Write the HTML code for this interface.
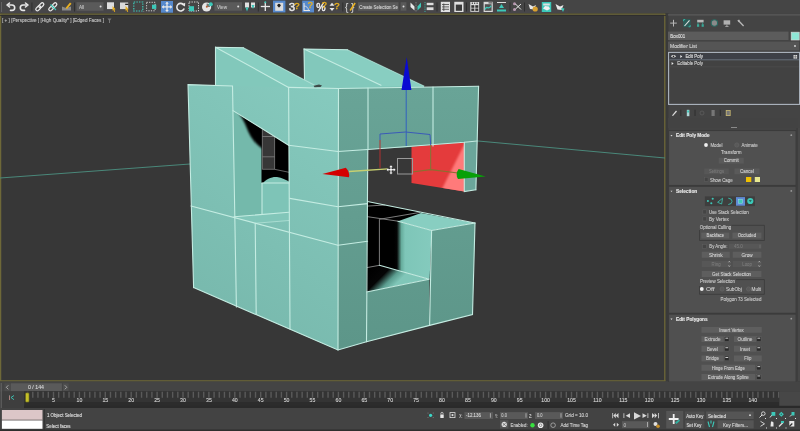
<!DOCTYPE html>
<html><head><meta charset="utf-8">
<style>
html,body{margin:0;padding:0;width:800px;height:431px;overflow:hidden;background:#444;}
svg{display:block;font-family:"Liberation Sans",sans-serif;will-change:transform;}
</style></head><body>
<svg width="800" height="431" viewBox="0 0 800 431">
<rect x="0" y="0" width="800" height="14" fill="#454545"/>
<rect x="0" y="10" width="568" height="3.5" fill="#474649"/>
<rect x="0" y="13" width="666" height="368" fill="#373737"/>
<rect x="666" y="13" width="134" height="368" fill="#444444"/>
<path d="M0.6,381 V14.2 H664.8 V381" fill="none" stroke="#6e6838" stroke-width="1.3"/>
<rect x="0" y="380.2" width="665.5" height="1.3" fill="#6e6838"/>
<rect x="0" y="15" width="666" height="0.8" fill="#2e2c2c"/>
<g id="toolbar">
<line x1="1.5" y1="2" x2="1.5" y2="12" stroke="#6a6a6a" stroke-width="0.8"/>
<line x1="31.9" y1="2.5" x2="31.9" y2="11.5" stroke="#2c2c2c" stroke-width="0.9"/>
<line x1="74.5" y1="2.5" x2="74.5" y2="11.5" stroke="#2c2c2c" stroke-width="0.9"/>
<line x1="258.3" y1="2.5" x2="258.3" y2="11.5" stroke="#2c2c2c" stroke-width="0.9"/>
<line x1="342.8" y1="2.5" x2="342.8" y2="11.5" stroke="#2c2c2c" stroke-width="0.9"/>
<line x1="437" y1="2.5" x2="437" y2="11.5" stroke="#2c2c2c" stroke-width="0.9"/>
<line x1="466.5" y1="2.5" x2="466.5" y2="11.5" stroke="#2c2c2c" stroke-width="0.9"/>
<line x1="510" y1="2.5" x2="510" y2="11.5" stroke="#2c2c2c" stroke-width="0.9"/>
<line x1="524.5" y1="2.5" x2="524.5" y2="11.5" stroke="#2c2c2c" stroke-width="0.9"/>
<g fill="none" stroke="#e8e8e8" stroke-width="1.6" stroke-linecap="round" stroke-linejoin="round">
<path d="M8.5,5 H12 A2.7,2.7 0 0 1 12,10.4 H10.5"/><path d="M9.5,3 L7,5 L9.5,7"/>
<path d="M26.5,5 H23 A2.7,2.7 0 0 0 23,10.4 H24.5"/><path d="M25.5,3 L28,5 L25.5,7"/>
</g>
<g fill="none" stroke="#e8e8e8" stroke-width="1.25">
<rect x="-2.9" y="-1.55" width="5.8" height="3.1" rx="1.55" transform="translate(38.3,8.3) rotate(-45)"/>
<rect x="-2.9" y="-1.55" width="5.8" height="3.1" rx="1.55" transform="translate(41.3,5.3) rotate(-45)"/>
<rect x="-2.9" y="-1.55" width="5.8" height="3.1" rx="1.55" transform="translate(51.3,8.3) rotate(-45)"/>
<rect x="-2.9" y="-1.55" width="5.8" height="3.1" rx="1.55" transform="translate(54.3,5.3) rotate(-45)"/>
</g>
<line x1="50.5" y1="4.5" x2="56" y2="10" stroke="#3cc8b8" stroke-width="1.1"/>
<path d="M62,6.5 L66,8 L71,6.5 V10.5 H62 Z" fill="#8a8a8a"/>
<path d="M65.5,8 L70,2.5 L71.5,3.8 L67,9 Z" fill="#e8b020"/>
<rect x="76.5" y="2.2" width="27" height="8.6" fill="#5a5a5a"/>
<text x="79" y="8.8" font-size="4.6" font-weight="normal" fill="#c4c4c4" stroke="#c4c4c4" stroke-width="0.1" text-anchor="start">All</text>
<circle cx="100.6" cy="6.5" r="1" fill="#ddd"/>
<rect x="107" y="2.3" width="7" height="6.8" fill="#dedede"/>
<path d="M112.6,6 l3,3.2 l-1.2,0.3 l0.8,2 l-1,0.4 l-0.8,-2 l-0.9,0.9 z" fill="#e8b020"/>
<rect x="120" y="2.5" width="8.2" height="6.6" fill="#d8d8d8"/>
<rect x="125.2" y="3.7" width="3.2" height="1.3" fill="#222"/>
<path d="M125.6,6 l3,3.2 l-1.2,0.3 l0.8,2 l-1,0.4 l-0.8,-2 l-0.9,0.9 z" fill="#e8b020"/>
<rect x="133.8" y="2" width="9" height="9" fill="none" stroke="#3cc8b8" stroke-width="1.2" stroke-dasharray="1.4 1.2"/>
<path d="M143.5,11 l0.8,0.2 l-0.6,0.6z" fill="#ddd"/>
<rect x="146.6" y="2.3" width="8.5" height="8.5" fill="none" stroke="#d0d0d0" stroke-width="1" stroke-dasharray="1.2 1.3"/>
<rect x="152" y="4.7" width="4.3" height="4.2" fill="#3cc8b8"/>
<rect x="161" y="1" width="12" height="11.7" fill="#5689cc"/>
<g stroke="#e8e8e8" stroke-width="1.3" fill="none"><line x1="167" y1="2.5" x2="167" y2="11.2"/><line x1="162.5" y1="6.9" x2="171.5" y2="6.9"/></g>
<g fill="#e8e8e8"><path d="M167,1.8 l-1.8,2 h3.6z"/><path d="M167,12 l-1.8,-2 h3.6z"/><path d="M161.8,6.9 l2,-1.8 v3.6z"/><path d="M172.2,6.9 l-2,-1.8 v3.6z"/></g>
<path d="M183.8,5 A3.8,3.8 0 1 0 184.2,8.5" fill="none" stroke="#e8e8e8" stroke-width="1.6"/>
<path d="M181.5,4.6 L185.2,2.8 L185,6.5 Z" fill="#e8e8e8"/>
<rect x="189" y="2" width="9.5" height="9" fill="none" stroke="#d8d8d8" stroke-width="1" stroke-dasharray="1.3 1.2"/>
<rect x="189" y="6.2" width="5" height="5" fill="#3cc8b8"/>
<circle cx="206.6" cy="7" r="4.6" fill="#e6e6e6"/>
<path d="M206.6,7 L206.6,3.6 A3.4,3.4 0 0 1 210,7 Z" fill="#777"/>
<circle cx="210.8" cy="4.2" r="2" fill="#3cc8b8"/>
<circle cx="206.8" cy="6.8" r="1" fill="#c06030"/>
<rect x="214.4" y="2.2" width="27.6" height="8.5" fill="#5a5a5a"/>
<text x="217" y="8.8" font-size="4.6" font-weight="normal" fill="#c4c4c4" stroke="#c4c4c4" stroke-width="0.1" text-anchor="start" textLength="10" lengthAdjust="spacingAndGlyphs">View</text>
<circle cx="238.2" cy="6.5" r="1" fill="#ddd"/>
<rect x="245" y="2.5" width="4" height="5" fill="#e0e0e0"/>
<rect x="251" y="2.5" width="4" height="5" fill="#e0e0e0"/>
<path d="M245.5,7.5 l1.5,4 l1.5,-4z M251.5,5 l1.5,4 l1.5,-4z" fill="#3cc8b8"/>
<g stroke="#e8e8e8" stroke-width="1.3"><line x1="265.3" y1="2" x2="265.3" y2="11"/><line x1="260.8" y1="6.5" x2="270" y2="6.5"/></g>
<circle cx="265.3" cy="2.2" r="1" fill="#3cc8b8"/>
<rect x="273" y="0.6" width="12.4" height="11.8" fill="#5689cc"/>
<rect x="275.2" y="2.8" width="8" height="8" fill="#dcdcdc"/>
<circle cx="279" cy="5.3" r="1.6" fill="#222"/><path d="M278.2,6 h1.6 l-0.8,2z" fill="#222"/>
<text x="288.8" y="11.4" font-size="11.5" font-weight="normal" fill="#e8e8e8" stroke="#e8e8e8" text-anchor="start" stroke-width="0.5">3</text>
<text x="294.2" y="8.6" font-size="9.5" font-weight="normal" fill="#e8b020" stroke="#e8b020" text-anchor="start" stroke-width="0.4">?</text>
<rect x="302.2" y="0.6" width="11.8" height="11.8" fill="#5689cc"/>
<path d="M304,3 V10.5 H310" fill="none" stroke="#e8e8e8" stroke-width="1.1"/>
<path d="M304,6 A4.5,4.5 0 0 1 308.5,10.5" fill="none" stroke="#e8e8e8" stroke-width="0.8"/>
<text x="307.8" y="8.4" font-size="9" font-weight="normal" fill="#e8b020" stroke="#e8b020" text-anchor="start" stroke-width="0.4">?</text>
<text x="316.2" y="11.3" font-size="10.5" font-weight="normal" fill="#e8e8e8" stroke="#e8e8e8" text-anchor="start" stroke-width="0.5">%</text>
<text x="321.8" y="8.4" font-size="9" font-weight="normal" fill="#e8b020" stroke="#e8b020" text-anchor="start" stroke-width="0.4">?</text>
<path d="M332,2.8 l-2.5,3 h5z M332,11 l-2.5,-3 h5z" fill="#e8e8e8"/>
<text x="334.2" y="8.6" font-size="9.5" font-weight="normal" fill="#e8b020" stroke="#e8b020" text-anchor="start" stroke-width="0.4">?</text>
<text x="345" y="11" font-size="10" font-weight="normal" fill="#d0d0d0" stroke="#d0d0d0" stroke-width="0.1" text-anchor="start">{</text>
<text x="351" y="11" font-size="10" font-weight="normal" fill="#d0d0d0" stroke="#d0d0d0" stroke-width="0.1" text-anchor="start">}</text>
<path d="M349.5,10 L354.5,2.5 L355.8,3.5 L350.8,11 Z" fill="#e8b020"/>
<rect x="358" y="2.2" width="40.5" height="8.5" fill="#5a5a5a"/>
<text x="359.3" y="9" font-size="5" font-weight="normal" fill="#d8d8d8" stroke="#d8d8d8" stroke-width="0.1" text-anchor="start" textLength="38.6" lengthAdjust="spacingAndGlyphs">Create Selection Se</text>
<rect x="400.6" y="2.2" width="5.8" height="8.5" fill="#5a5a5a"/>
<circle cx="403.5" cy="6.5" r="1" fill="#ddd"/>
<path d="M410.5,2.5 L414.5,6.5 L414.5,10.5 L410.5,7 Z" fill="#e8e8e8"/>
<path d="M421,2.5 L417.5,6.5 L417.5,10.5 L421,7 Z" fill="#3cc8b8"/>
<line x1="416" y1="2" x2="416" y2="12" stroke="#bbb" stroke-width="0.6" stroke-dasharray="0.8 0.8"/>
<line x1="425" y1="2" x2="425" y2="12" stroke="#3cc8b8" stroke-width="0.8" stroke-dasharray="1 0.8"/>
<rect x="426.7" y="2.8" width="6.8" height="2.4" fill="#ddd"/>
<rect x="426.7" y="7.3" width="6.8" height="2.8" fill="#ddd"/>
<rect x="440.8" y="1.8" width="9.2" height="10.2" fill="#e0e0e0"/>
<line x1="442" y1="4.5" x2="449" y2="4.5" stroke="#444" stroke-width="0.8"/>
<line x1="442" y1="6.9" x2="449" y2="6.9" stroke="#444" stroke-width="0.8"/>
<line x1="442" y1="9.3" x2="449" y2="9.3" stroke="#444" stroke-width="0.8"/>
<line x1="443.8" y1="3.5" x2="443.8" y2="11" stroke="#444" stroke-width="0.8"/>
<rect x="454.3" y="1.8" width="9.2" height="10.2" fill="#e0e0e0"/>
<rect x="455.8" y="4.6" width="6.2" height="6.2" fill="#3a3a3a"/>
<rect x="470.3" y="2" width="8.8" height="9.8" fill="#dcdcdc"/>
<rect x="471.3" y="5.2" width="3" height="2.6" fill="#333"/>
<rect x="475.3" y="5.2" width="3" height="2.6" fill="#333"/>
<rect x="471.3" y="8.5" width="3" height="2.4" fill="#333"/>
<rect x="475.3" y="8.5" width="3" height="2.4" fill="#333"/>
<rect x="471.8" y="2.5" width="1" height="1.5" fill="#333"/>
<rect x="474.2" y="2.5" width="1" height="1.5" fill="#333"/>
<rect x="476.6" y="2.5" width="1" height="1.5" fill="#333"/>
<rect x="483.6" y="1.8" width="9.2" height="10.2" fill="#d8d8d8"/>
<rect x="484.8" y="4.2" width="6.8" height="6.6" fill="#505050"/>
<rect x="488.5" y="2.3" width="3.8" height="1.2" fill="#555"/>
<path d="M485.2,9.5 C486.5,4.5 488.5,11 491.2,5.8" fill="none" stroke="#3cc8b8" stroke-width="1.3"/>
<rect x="497" y="2" width="9" height="1" fill="#ddd"/>
<path d="M501.5,4 l-2.5,4 h5z" fill="#3cc8b8"/>
<rect x="497" y="9.5" width="9" height="2" fill="#3cc8b8"/>
<circle cx="514.5" cy="3.7" r="1.5" fill="#b898b0"/><circle cx="514.5" cy="9.4" r="1.5" fill="#b898b0"/>
<path d="M515.5,4 L521,9.5 M515.5,9 L521,4" stroke="#e8e8e8" stroke-width="1" fill="none"/>
<path d="M528.5,4 L530,9 L534,9.5 L536,5 L533,6.5 Z" fill="#e8e8e8"/>
<circle cx="535.2" cy="9" r="2.6" fill="#d8a030"/>
<rect x="541.8" y="2" width="9.4" height="10" fill="#3cc8b8"/>
<rect x="543.2" y="3.5" width="6.6" height="2" fill="#e0e0e0"/>
<path d="M543,8.5 l2,-2.5 l4,0.5 l1,2.5 l-3,1.5z" fill="#f0f0f0"/>
<path d="M555.5,4 L557.5,9.5 L561.5,10 L563.5,5 L560,6.5 Z" fill="#e8e8e8"/>
<path d="M561,8 l3.5,0.5 l-1.5,3.5z" fill="#3cc8b8"/>
</g>
<text x="2" y="22" font-size="5.4" font-weight="normal" fill="#c8c8c8" stroke="#c8c8c8" stroke-width="0.1" text-anchor="start" textLength="102" lengthAdjust="spacingAndGlyphs">[ + ] [Perspective ] [High Quality* ] [Edged Faces ]</text>
<path d="M107.5,18.5 h4 l-1.5,2 v2.5 h-1 v-2.5 z" fill="#777"/>
<g id="model">
<defs>
<linearGradient id="rg" x1="411" y1="146" x2="464" y2="170" gradientUnits="userSpaceOnUse">
<stop offset="0" stop-color="#e23a3c"/><stop offset="0.55" stop-color="#e53c3e"/><stop offset="0.75" stop-color="#fa6a6a"/><stop offset="1" stop-color="#ff8c8c"/>
</linearGradient>
<linearGradient id="stepL" x1="394" y1="0" x2="431" y2="0" gradientUnits="userSpaceOnUse">
<stop offset="0" stop-color="#000"/><stop offset="0.08" stop-color="#050505"/><stop offset="0.2" stop-color="#66ac9c"/><stop offset="0.3" stop-color="#7ec6b8"/><stop offset="1" stop-color="#84cabd"/>
</linearGradient>
<linearGradient id="lowTop" x1="372" y1="268" x2="392" y2="288" gradientUnits="userSpaceOnUse">
<stop offset="0" stop-color="#000"/><stop offset="0.45" stop-color="#050505"/><stop offset="0.75" stop-color="#5a9c8e"/><stop offset="1" stop-color="#80c6b8"/>
</linearGradient>
<radialGradient id="holeSh" cx="289" cy="110" r="62" gradientUnits="userSpaceOnUse">
<stop offset="0" stop-color="#000"/><stop offset="0.6" stop-color="#000"/><stop offset="0.85" stop-color="#000" stop-opacity="0.6"/><stop offset="1" stop-color="#000" stop-opacity="0"/>
</radialGradient>
<linearGradient id="gL" x1="338" y1="88" x2="193" y2="300" gradientUnits="userSpaceOnUse"><stop offset="0" stop-color="#86cabe"/><stop offset="1" stop-color="#78b9ad"/></linearGradient>
<linearGradient id="gF" x1="0" y1="86" x2="0" y2="345" gradientUnits="userSpaceOnUse"><stop offset="0" stop-color="#69a497"/><stop offset="1" stop-color="#5d9689"/></linearGradient>
</defs>
<!-- grid lines -->
<line x1="0" y1="178" x2="190" y2="164" stroke="#4a887a" stroke-width="1"/>
<line x1="478" y1="141" x2="665" y2="158" stroke="#4a887a" stroke-width="1"/>
<!-- right slab -->
<polygon points="304,49 347.5,49.75 424,86 424,95 304,95" fill="#82c8bb"/>
<polygon points="304,49 347.5,49.75 424,86 381,86" fill="#88cec1"/>
<!-- left slab -->
<polygon points="215.5,47.2 243.4,47.7 318,87 318,95 215.5,95" fill="#82c8bb"/>
<polygon points="215.5,47.2 243.4,47.7 318,87 288.6,87.4" fill="#88cec1"/>
<!-- left face -->
<polygon points="188,84.6 232.5,86 288.6,87.4 338.5,88.5 338,350 193.6,287.6" fill="url(#gL)"/>
<!-- front face -->
<polygon points="338.5,88.5 478.6,86.2 477.2,141 464.3,142.3 411.1,146.9 367.8,149.5 366.5,341.7 338,350" fill="url(#gF)"/>
<polygon points="464.3,142.3 477.2,141 475.9,189.8 464.3,191.5" fill="#6ba69b"/>
<polygon points="411.5,146.7 464.3,142.3 464.3,191.5 411.5,182.9" fill="#e43b3c"/>
<clipPath id="redclip"><polygon points="411.5,146.7 464.3,142.3 464.3,191.5 411.5,182.9"/></clipPath>
<g clip-path="url(#redclip)"><polygon points="440,193 463,147 468,140 468,195" fill="#ff7a7a" filter="url(#bl1)"/></g>
<!-- interior -->
<polygon points="367.4,201.5 475,223 431,231 429.6,279 366.5,293" fill="#000"/>
<polygon points="394,221 398,221.2 431.6,230.5 429.6,279.2 394,269.8" fill="url(#stepL)"/>
<polygon points="398,221.2 421,213 475,223 431.6,230.5" fill="#88cec1"/>
<polygon points="367,267.6 379.4,265.3 429.3,279.2 366.5,292" fill="url(#lowTop)"/>
<polygon points="431.6,230.5 475,223 472.5,314.5 429.6,325.4" fill="url(#gF)"/>
<polygon points="366.5,292 429.3,279.2 429.6,325.4 366.5,341.7" fill="url(#gF)"/>
<g stroke="#9a9a9a" stroke-width="0.8" fill="none">
<line x1="367" y1="206.1" x2="385.2" y2="205"/>
<line x1="379.4" y1="219.3" x2="420" y2="212.4"/>
<line x1="367" y1="216.6" x2="398" y2="221.2"/>
<line x1="379.4" y1="219.3" x2="379.4" y2="265.3"/>
<line x1="367" y1="267.6" x2="379.4" y2="265.3"/>
</g>
<!-- hole in left face -->
<filter id="bl1" x="-30%" y="-30%" width="160%" height="160%"><feGaussianBlur stdDeviation="1.3"/></filter>
<filter id="bl05" x="-30%" y="-30%" width="160%" height="160%"><feGaussianBlur stdDeviation="0.7"/></filter>
<polygon points="233,110.6 262,128.7 262,214 234,216.8" fill="#74b9ab"/>
<clipPath id="wallclip"><polygon points="233,110.6 262,128.7 262,214 234,216.8"/></clipPath>
<g clip-path="url(#wallclip)"><path d="M237,111 L263,127.5 L263,149 C256,145 250,137 247,128.5 C244,121 241,116 237,111 Z" fill="#000" filter="url(#bl1)"/></g>
<polygon points="261.5,128.5 289,145.5 289,183 261.5,183" fill="#000"/>
<polygon points="262.4,129.2 274.6,136.9 274.6,169.3 262.4,169.3" fill="#373737"/>
<g stroke="#8c8c8c" stroke-width="0.7" fill="none">
<line x1="262.4" y1="129.2" x2="262.4" y2="169.3"/>
<line x1="274.6" y1="136.9" x2="274.6" y2="169.3"/>
<line x1="262.4" y1="136.5" x2="274.6" y2="136.5"/>
<line x1="262.4" y1="156.8" x2="274.6" y2="156.8"/>
<line x1="262.4" y1="169.3" x2="274.6" y2="169.3"/>
<line x1="274.6" y1="169.3" x2="289" y2="172.3"/>
</g>
<path d="M262,184 C266,179 272,176.5 277,177 C282,177.5 286,180 289,181.5 L289,212.2 L262,214 Z" fill="#80c6b8" filter="url(#bl05)"/>
<polygon points="262,184 289,183 289,212.2 262,214" fill="#7ec4b7"/>
<polygon points="234,216.8 289,212.2 289,220.5 255.6,223.2 234.7,218" fill="#82c6b9"/>
<!-- edges -->
<g stroke="#c4ece2" stroke-width="1.1" fill="none" stroke-linecap="round">
<polyline points="215.5,84.6 215.5,47.2 243.4,47.7"/>
<line x1="215.5" y1="47.2" x2="288.6" y2="87.4"/>
<polyline points="304.5,78.9 304,49 347.5,49.75"/>
<line x1="304" y1="49" x2="381" y2="85.3"/>
<line x1="243.4" y1="47.7" x2="318" y2="87" stroke-opacity="0.6"/>
<line x1="347.5" y1="49.75" x2="424" y2="86" stroke-opacity="0.5"/>
<polyline points="193.6,287.6 188,84.6 232.5,86 236.4,307"/>
<polyline points="288.6,87.4 338.5,88.5 478.6,86.2"/>
<line x1="288.6" y1="87.4" x2="290" y2="329"/>
<line x1="338.5" y1="88.5" x2="338" y2="350"/>
<polyline points="193.6,287.6 338,350 366.5,341.7 429.6,325.4 472.5,314.5 475,223"/>
<line x1="478.6" y1="86.2" x2="475.9" y2="189.8"/>
<line x1="233" y1="110.6" x2="289" y2="145.5"/>
<line x1="191" y1="206" x2="338" y2="245.3"/>
<polyline points="288.6,145.3 338,151.5 367.6,149.5"/>
<polyline points="289.7,198.4 338,206.7 367.6,203.6"/>
<line x1="338" y1="245.3" x2="367.6" y2="241.2"/>
<line x1="255.2" y1="223.4" x2="256.2" y2="314"/>
<line x1="234" y1="216.8" x2="289" y2="212.2"/>
<line x1="255.6" y1="223.2" x2="289" y2="220.5" stroke-opacity="0.6"/>
<line x1="262" y1="183" x2="262" y2="214"/>
<line x1="262" y1="183" x2="289" y2="183"/>
<line x1="368" y1="88" x2="368" y2="149.5"/>
<line x1="433" y1="87" x2="433" y2="146"/>
<polyline points="367.8,149.5 464.3,142.3 477.2,141"/>
<polyline points="464.3,142.3 464.3,191.5 475.9,189.8"/>
<line x1="367.4" y1="201.5" x2="475" y2="223"/>
<polyline points="398,221.2 431.6,230.5 475,223"/>
<line x1="431.6" y1="230.5" x2="429.6" y2="325.4"/>
<polyline points="366.5,292 429.3,279.2 379.4,265.3"/>
<line x1="367.8" y1="149.5" x2="366.5" y2="341.7"/>
</g>
<polygon points="313.5,85.8 319,84.6 322,85.4 320.5,87 314.5,87.2" fill="#3e4a48"/>
<!-- gizmo -->
<g fill="none" stroke-width="1">
<line x1="406.2" y1="88" x2="406.2" y2="146" stroke="#3060c0"/>
<polyline points="380,140 380,134 405.6,132 430,134.5 430.7,145" stroke="#3a5ab8"/>
<line x1="380" y1="140" x2="380" y2="168" stroke="#b03030"/>
<line x1="430.7" y1="145" x2="430.7" y2="169.6" stroke="#7a7a38"/>
<polyline points="349,171.5 388,168.8" stroke="#c8d070" stroke-width="1.3"/>
<polyline points="412,172 430.7,169.6 458,173" stroke="#8a7030" stroke-width="1.2"/>
<rect x="397.5" y="158.5" width="15" height="15.5" stroke="#9a9a9a" stroke-width="1"/>
</g>
<polygon points="406.7,57 401.5,90 411.4,90" fill="#0a0ad2"/>
<path d="M322.4,174.1 L345.8,167.8 Q350,172 349,177.3 Z" fill="#d40000"/>
<path d="M485.7,176.6 L458.6,169 Q455,174 458,179 Z" fill="#08a008"/>
<!-- move cursor -->
<g fill="#fff" stroke="#222" stroke-width="0.4">
<path d="M391,165 l2,2.2 h-1.2 v1.8 h1.8 v-1.2 l2.2,2 l-2.2,2 v-1.2 h-1.8 v1.8 h1.2 l-2,2.2 l-2,-2.2 h1.2 v-1.8 h-1.8 v1.2 l-2.2,-2 l2.2,-2 v1.2 h1.8 v-1.8 h-1.2 z"/>
</g>
</g>

<g id="panel">
<rect x="666" y="13" width="134" height="368" fill="#444444"/>
<rect x="666" y="13" width="2.4" height="368" fill="#3a3a3a"/>
<line x1="668" y1="14.8" x2="800" y2="14.8" stroke="#5a5a5a" stroke-width="1.2"/>
<g fill="none" stroke="#b8b8b8" stroke-width="1">
<path d="M673.5,19.8 V26.5 M670.2,23.1 H676.8"/>
</g>
<rect x="683.2" y="19.2" width="7.4" height="8" fill="#2c5c58"/>
<path d="M684.5,26 L689.5,20.3" stroke="#e0e0e0" stroke-width="1.1"/>
<path d="M683.6,19.6 h1.6 M683.6,19.6 v1.6 M690.2,26.8 h-1.6 M690.2,26.8 v-1.6" stroke="#3cc8b8" stroke-width="0.8"/>
<rect x="697.2" y="19.8" width="6.4" height="2.6" fill="#b8b8b8"/>
<rect x="697" y="24.2" width="2.2" height="2.6" fill="#3aa898"/>
<rect x="701.6" y="24.2" width="2.2" height="2.6" fill="#3aa898"/>
<path d="M698,22.4 v1.8 M702.7,22.4 v1.8" stroke="#3aa898" stroke-width="0.8"/>
<circle cx="714.4" cy="23" r="3.2" fill="#8a8a8a" stroke="#2a6a62" stroke-width="1.1"/>
<rect x="723.6" y="20.3" width="6.6" height="4.3" fill="#b0b0b0"/>
<line x1="726.9" y1="24.6" x2="726.9" y2="26.2" stroke="#b0b0b0" stroke-width="0.9"/>
<line x1="725.3" y1="26.5" x2="728.5" y2="26.5" stroke="#b0b0b0" stroke-width="0.8"/>
<path d="M738.8,21 L743.6,26" stroke="#b8b8b8" stroke-width="1.3"/><path d="M737.3,20.5 l1.8,-0.9 l1,1.6 l-1.5,1z" fill="#b8b8b8"/>
<rect x="668" y="31.6" width="120.5" height="8.4" fill="#5c5c5c"/>
<text x="670.3" y="38.2" font-size="5" font-weight="normal" fill="#e0e0e0" stroke="#e0e0e0" stroke-width="0.1" text-anchor="start" textLength="15" lengthAdjust="spacingAndGlyphs">Box001</text>
<rect x="791.2" y="32.2" width="8" height="7.8" fill="#8ee6d6" stroke="#d8d8d8" stroke-width="0.7"/>
<rect x="668" y="41.6" width="131" height="8.8" fill="#555555"/>
<text x="670" y="48.3" font-size="5" font-weight="normal" fill="#d8d8d8" stroke="#d8d8d8" stroke-width="0.1" text-anchor="start" textLength="27" lengthAdjust="spacingAndGlyphs">Modifier List</text>
<circle cx="795" cy="46" r="0.9" fill="#ddd"/>
<rect x="668.6" y="52.4" width="131" height="52" fill="#424242" stroke="#aeb6c0" stroke-width="1.1"/>
<rect x="669.5" y="53.4" width="129.5" height="6.2" fill="#3d4047"/>
<line x1="669.5" y1="59.8" x2="799" y2="59.8" stroke="#707a88" stroke-width="0.8"/>
<path d="M670.9,56.3 q2.6,-2.6 5.2,0 q-2.6,2.6 -5.2,0z" fill="#e8e8e8"/><circle cx="673.5" cy="56.3" r="0.9" fill="#222"/>
<path d="M680.3,54.9 l2,1.5 l-2,1.5z" fill="#e8e8e8"/>
<text x="685.4" y="58.3" font-size="5" font-weight="normal" fill="#e0e0e0" stroke="#e0e0e0" stroke-width="0.1" text-anchor="start" textLength="17.5" lengthAdjust="spacingAndGlyphs">Edit Poly</text>
<rect x="793.5" y="55" width="3.6" height="3.6" fill="#e0e0e0"/>
<line x1="795.3" y1="55" x2="795.3" y2="58.6" stroke="#444" stroke-width="0.5"/>
<line x1="793.5" y1="56.8" x2="797.1" y2="56.8" stroke="#444" stroke-width="0.5"/>
<path d="M671.6,61.9 l2,1.5 l-2,1.5z" fill="#e8e8e8"/>
<text x="677.3" y="65.2" font-size="5" font-weight="normal" fill="#d8d8d8" stroke="#d8d8d8" stroke-width="0.1" text-anchor="start" textLength="25.6" lengthAdjust="spacingAndGlyphs">Editable Poly</text>
<line x1="669.5" y1="66.9" x2="799" y2="66.9" stroke="#505050" stroke-width="0.6"/>
<path d="M672,115.5 L676,110.5 L677,111.5 L673,116z" fill="#ddd"/>
<line x1="680.8" y1="109.8" x2="680.8" y2="116" stroke="#2a2a2a" stroke-width="0.8"/>
<rect x="686.8" y="109.8" width="2.6" height="6.4" fill="#b0d8d8"/>
<rect x="687.2" y="110.5" width="1.8" height="2" fill="#3cc8b8"/>
<line x1="695" y1="109.8" x2="695" y2="116" stroke="#2a2a2a" stroke-width="0.8"/>
<circle cx="702" cy="113" r="2" fill="none" stroke="#5a5a5a" stroke-width="0.9"/>
<rect x="711.5" y="110" width="3.2" height="6" fill="#777"/>
<line x1="720.3" y1="109.8" x2="720.3" y2="116" stroke="#2a2a2a" stroke-width="0.8"/>
<rect x="725.8" y="110" width="4.8" height="6" fill="#c8b870"/>
<rect x="726.6" y="110.8" width="3.2" height="4.4" fill="#777"/>
<rect x="668" y="118" width="130" height="10" fill="#434343"/>
<line x1="731" y1="127.5" x2="737" y2="127.5" stroke="#8a8a8a" stroke-width="1"/>
<rect x="668.6" y="130.6" width="127.4" height="54.80000000000001" fill="#505050" stroke="#3a3a3a" stroke-width="0.9"/>
<path d="M670.5,135.0 h2 l-1,1.4z" fill="#e0e0e0"/>
<text x="676" y="137.4" font-size="4.8" font-weight="bold" fill="#ececec" stroke="#ececec" stroke-width="0.1" text-anchor="start" textLength="33.6" lengthAdjust="spacingAndGlyphs">Edit Poly Mode</text>
<circle cx="791.3" cy="135.2" r="0.9" fill="#9a9a9a"/>
<circle cx="706" cy="145" r="1.9" fill="#f0f0f0"/>
<text x="710.4" y="146.9" font-size="4.8" font-weight="normal" fill="#cdcdcd" stroke="#cdcdcd" stroke-width="0.1" text-anchor="start" textLength="12.2" lengthAdjust="spacingAndGlyphs">Model</text>
<circle cx="736.8" cy="145" r="2.1" fill="#595959" stroke="#6a6a6a" stroke-width="0.5"/>
<text x="741.5" y="146.9" font-size="4.8" font-weight="normal" fill="#cdcdcd" stroke="#cdcdcd" stroke-width="0.1" text-anchor="start" textLength="16.2" lengthAdjust="spacingAndGlyphs">Animate</text>
<text x="721" y="153.7" font-size="4.8" font-weight="normal" fill="#cdcdcd" stroke="#cdcdcd" stroke-width="0.1" text-anchor="start" textLength="20.5" lengthAdjust="spacingAndGlyphs">Transform</text>
<rect x="718.8" y="157.7" width="25" height="5.8" fill="#5a5a5a"/>
<text x="731.3" y="162.3" font-size="4.8" font-weight="normal" fill="#d4d4d4" stroke="#d4d4d4" stroke-width="0.1" text-anchor="middle" textLength="15" lengthAdjust="spacingAndGlyphs">Commit</text>
<rect x="704.3" y="168.4" width="24.4" height="5.8" fill="#575757"/>
<text x="716.5" y="173.00000000000003" font-size="4.8" font-weight="normal" fill="#7a7a7a" stroke="#7a7a7a" stroke-width="0.1" text-anchor="middle" textLength="15" lengthAdjust="spacingAndGlyphs">Settings</text>
<rect x="734.5" y="168.4" width="25" height="5.8" fill="#5a5a5a"/>
<text x="747.0" y="173.00000000000003" font-size="4.8" font-weight="normal" fill="#d4d4d4" stroke="#d4d4d4" stroke-width="0.1" text-anchor="middle" textLength="14" lengthAdjust="spacingAndGlyphs">Cancel</text>
<rect x="704.3" y="177.2" width="3.8" height="4.2" fill="#444" stroke="#5e5e5e" stroke-width="0.6"/>
<text x="710" y="181.5" font-size="4.8" font-weight="normal" fill="#cdcdcd" stroke="#cdcdcd" stroke-width="0.1" text-anchor="start" textLength="22.7" lengthAdjust="spacingAndGlyphs">Show Cage</text>
<rect x="746" y="177" width="5.3" height="5" fill="#f0c000"/>
<rect x="754.8" y="177" width="5.2" height="5" fill="#e8e890"/>
<rect x="668.6" y="186.3" width="127.4" height="126.89999999999998" fill="#505050" stroke="#3a3a3a" stroke-width="0.9"/>
<path d="M670.5,190.70000000000002 h2 l-1,1.4z" fill="#e0e0e0"/>
<text x="676" y="193.10000000000002" font-size="4.8" font-weight="bold" fill="#ececec" stroke="#ececec" stroke-width="0.1" text-anchor="start" textLength="21.3" lengthAdjust="spacingAndGlyphs">Selection</text>
<circle cx="791.3" cy="190.9" r="0.9" fill="#9a9a9a"/>
<rect x="704.9" y="196.4" width="50" height="9.7" fill="#3e3e3e"/>
<g fill="#3cc8b8">
<circle cx="707.9" cy="201" r="1.05"/><circle cx="712.7" cy="198.7" r="1.05"/><circle cx="711.3" cy="203.2" r="1.05"/>
</g>
<path d="M717.6,202.3 L722.6,198.2 L721.6,204 Z" fill="none" stroke="#3cb8a8" stroke-width="0.9"/>
<path d="M728.3,198.2 q3.8,0.4 3.8,3.1 q0,2.8 -3.8,3.2" fill="none" stroke="#3cb8a8" stroke-width="0.95"/>
<rect x="736" y="197.1" width="9" height="8.6" fill="#5f8ad4"/>
<rect x="738.7" y="199.5" width="3.8" height="3.7" fill="#40c8b8" stroke="#9ae8e0" stroke-width="0.5"/>
<circle cx="750.3" cy="201" r="3.1" fill="#3cc8b8"/><path d="M748.8,200 l1.5,2.2 l1.5,-2.2z" fill="#2a6a60"/>
<rect x="702.8" y="209.8" width="3.8" height="4.2" fill="#444" stroke="#5e5e5e" stroke-width="0.6"/>
<text x="708.9" y="213.8" font-size="4.8" font-weight="normal" fill="#cdcdcd" stroke="#cdcdcd" stroke-width="0.1" text-anchor="start" textLength="39.8" lengthAdjust="spacingAndGlyphs">Use Stack Selection</text>
<rect x="702.8" y="216.8" width="3.8" height="4.2" fill="#444" stroke="#5e5e5e" stroke-width="0.6"/>
<text x="708.9" y="220.8" font-size="4.8" font-weight="normal" fill="#cdcdcd" stroke="#cdcdcd" stroke-width="0.1" text-anchor="start" textLength="20" lengthAdjust="spacingAndGlyphs">By Vertex</text>
<path d="M731.5,225.3 H764.4 V240.5 H699.5 V230" fill="none" stroke="#3a3a3a" stroke-width="0.8"/>
<text x="699.8" y="228.8" font-size="4.8" font-weight="normal" fill="#cdcdcd" stroke="#cdcdcd" stroke-width="0.1" text-anchor="start" textLength="31.5" lengthAdjust="spacingAndGlyphs">Optional Culling</text>
<rect x="701.3" y="232.6" width="28" height="6" fill="#5e5e5e"/>
<text x="715.3" y="237.4" font-size="4.8" font-weight="normal" fill="#d4d4d4" stroke="#d4d4d4" stroke-width="0.1" text-anchor="middle" textLength="17.5" lengthAdjust="spacingAndGlyphs">Backface</text>
<rect x="732.4" y="232.6" width="29" height="6" fill="#5e5e5e"/>
<text x="746.9" y="237.4" font-size="4.8" font-weight="normal" fill="#d4d4d4" stroke="#d4d4d4" stroke-width="0.1" text-anchor="middle" textLength="18.5" lengthAdjust="spacingAndGlyphs">Occluded</text>
<rect x="702.5" y="244.3" width="3.8" height="4.2" fill="#444" stroke="#5e5e5e" stroke-width="0.6"/>
<text x="709.3" y="248.3" font-size="4.8" font-weight="normal" fill="#cdcdcd" stroke="#cdcdcd" stroke-width="0.1" text-anchor="start" textLength="18.2" lengthAdjust="spacingAndGlyphs">By Angle:</text>
<rect x="729" y="243.8" width="32.4" height="5" fill="#575757"/>
<text x="734" y="248.2" font-size="4.5" font-weight="normal" fill="#7a7a7a" stroke="#7a7a7a" stroke-width="0.1" text-anchor="start">45.0</text>
<path d="M760,244.6 v3.6" stroke="#777" stroke-width="0.7"/>
<rect x="701.8" y="251.8" width="28" height="6" fill="#5e5e5e"/>
<text x="715.8" y="256.6" font-size="4.8" font-weight="normal" fill="#d4d4d4" stroke="#d4d4d4" stroke-width="0.1" text-anchor="middle" textLength="13.5" lengthAdjust="spacingAndGlyphs">Shrink</text>
<rect x="732.7" y="251.8" width="28.7" height="6" fill="#5e5e5e"/>
<text x="747.0500000000001" y="256.6" font-size="4.8" font-weight="normal" fill="#d4d4d4" stroke="#d4d4d4" stroke-width="0.1" text-anchor="middle" textLength="11" lengthAdjust="spacingAndGlyphs">Grow</text>
<rect x="701.8" y="261" width="28.6" height="6.1" fill="#575757"/>
<text x="716.0999999999999" y="265.90000000000003" font-size="4.8" font-weight="normal" fill="#7a7a7a" stroke="#7a7a7a" stroke-width="0.1" text-anchor="middle" textLength="9" lengthAdjust="spacingAndGlyphs">Ring</text>
<rect x="732.7" y="261" width="28.7" height="6.1" fill="#575757"/>
<text x="747.0500000000001" y="265.90000000000003" font-size="4.8" font-weight="normal" fill="#7a7a7a" stroke="#7a7a7a" stroke-width="0.1" text-anchor="middle" textLength="9.5" lengthAdjust="spacingAndGlyphs">Loop</text>
<path d="M728.5,262.3 l0.8,-1 l0.8,1 M728.5,265.5 l0.8,1 l0.8,-1" fill="none" stroke="#ddd" stroke-width="0.6"/>
<path d="M758.5,262.3 l0.8,-1 l0.8,1 M758.5,265.5 l0.8,1 l0.8,-1" fill="none" stroke="#ddd" stroke-width="0.6"/>
<rect x="701.8" y="270.9" width="59.6" height="6.1" fill="#5e5e5e"/>
<text x="731.5999999999999" y="275.8" font-size="4.8" font-weight="normal" fill="#d4d4d4" stroke="#d4d4d4" stroke-width="0.1" text-anchor="middle" textLength="39" lengthAdjust="spacingAndGlyphs">Get Stack Selection</text>
<path d="M736,279.6 H764.4 V294.3 H699.5 V286" fill="none" stroke="#3a3a3a" stroke-width="0.8"/>
<text x="700" y="283.3" font-size="4.8" font-weight="normal" fill="#cdcdcd" stroke="#cdcdcd" stroke-width="0.1" text-anchor="start" textLength="35" lengthAdjust="spacingAndGlyphs">Preview Selection</text>
<circle cx="701.8" cy="289" r="1.9" fill="#f0f0f0"/>
<text x="706" y="291" font-size="4.8" font-weight="normal" fill="#cdcdcd" stroke="#cdcdcd" stroke-width="0.1" text-anchor="start" textLength="8.5" lengthAdjust="spacingAndGlyphs">Off</text>
<circle cx="722.1" cy="289" r="2.1" fill="#595959" stroke="#6a6a6a" stroke-width="0.5"/>
<text x="726" y="291" font-size="4.8" font-weight="normal" fill="#cdcdcd" stroke="#cdcdcd" stroke-width="0.1" text-anchor="start" textLength="15.8" lengthAdjust="spacingAndGlyphs">SubObj</text>
<circle cx="748.5" cy="289" r="2.1" fill="#595959" stroke="#6a6a6a" stroke-width="0.5"/>
<text x="751.6" y="291" font-size="4.8" font-weight="normal" fill="#cdcdcd" stroke="#cdcdcd" stroke-width="0.1" text-anchor="start" textLength="9.8" lengthAdjust="spacingAndGlyphs">Multi</text>
<text x="720.6" y="301.3" font-size="4.8" font-weight="normal" fill="#cdcdcd" stroke="#cdcdcd" stroke-width="0.1" text-anchor="start" textLength="40.8" lengthAdjust="spacingAndGlyphs">Polygon 73 Selected</text>
<rect x="668.6" y="314.1" width="127.4" height="75.89999999999998" fill="#505050" stroke="#3a3a3a" stroke-width="0.9"/>
<path d="M670.5,318.5 h2 l-1,1.4z" fill="#e0e0e0"/>
<text x="676" y="320.90000000000003" font-size="4.8" font-weight="bold" fill="#ececec" stroke="#ececec" stroke-width="0.1" text-anchor="start" textLength="31.6" lengthAdjust="spacingAndGlyphs">Edit Polygons</text>
<circle cx="791.3" cy="318.70000000000005" r="0.9" fill="#9a9a9a"/>
<rect x="701.4" y="326.9" width="60.3" height="5.8" fill="#5e5e5e"/>
<text x="731.55" y="331.5" font-size="4.8" font-weight="normal" fill="#d4d4d4" stroke="#d4d4d4" stroke-width="0.1" text-anchor="middle" textLength="24.5" lengthAdjust="spacingAndGlyphs">Insert Vertex</text>
<rect x="701.4" y="336.2" width="22.3" height="5.9" fill="#5e5e5e"/>
<text x="712.5" y="341.0" font-size="4.8" font-weight="normal" fill="#cdcdcd" stroke="#cdcdcd" stroke-width="0.1" text-anchor="middle" textLength="16" lengthAdjust="spacingAndGlyphs">Extrude</text>
<rect x="724.6" y="336.8" width="4.4" height="4.6" fill="#2a2a2a" stroke="#666" stroke-width="0.4"/>
<rect x="725.4" y="337.7" width="2.8" height="0.9" fill="#dddddd"/>
<rect x="733.9" y="336.2" width="22.2" height="5.9" fill="#5e5e5e"/>
<text x="745" y="341.0" font-size="4.8" font-weight="normal" fill="#cdcdcd" stroke="#cdcdcd" stroke-width="0.1" text-anchor="middle" textLength="15" lengthAdjust="spacingAndGlyphs">Outline</text>
<rect x="756.6" y="336.8" width="4.4" height="4.6" fill="#2a2a2a" stroke="#666" stroke-width="0.4"/>
<rect x="757.4" y="337.7" width="2.8" height="0.9" fill="#dddddd"/>
<rect x="701.4" y="345.8" width="22.3" height="5.9" fill="#5e5e5e"/>
<text x="712.5" y="350.6" font-size="4.8" font-weight="normal" fill="#cdcdcd" stroke="#cdcdcd" stroke-width="0.1" text-anchor="middle" textLength="11" lengthAdjust="spacingAndGlyphs">Bevel</text>
<rect x="724.6" y="346.40000000000003" width="4.4" height="4.6" fill="#2a2a2a" stroke="#666" stroke-width="0.4"/>
<rect x="725.4" y="347.3" width="2.8" height="0.9" fill="#dddddd"/>
<rect x="733.9" y="345.8" width="22.2" height="5.9" fill="#5e5e5e"/>
<text x="745" y="350.6" font-size="4.8" font-weight="normal" fill="#cdcdcd" stroke="#cdcdcd" stroke-width="0.1" text-anchor="middle" textLength="10" lengthAdjust="spacingAndGlyphs">Inset</text>
<rect x="756.6" y="346.40000000000003" width="4.4" height="4.6" fill="#2a2a2a" stroke="#666" stroke-width="0.4"/>
<rect x="757.4" y="347.3" width="2.8" height="0.9" fill="#dddddd"/>
<rect x="701.4" y="355.5" width="22.3" height="5.9" fill="#5e5e5e"/>
<text x="712.5" y="360.3" font-size="4.8" font-weight="normal" fill="#cdcdcd" stroke="#cdcdcd" stroke-width="0.1" text-anchor="middle" textLength="13" lengthAdjust="spacingAndGlyphs">Bridge</text>
<rect x="724.6" y="356.1" width="4.4" height="4.6" fill="#2a2a2a" stroke="#666" stroke-width="0.4"/>
<rect x="725.4" y="357.0" width="2.8" height="0.9" fill="#dddddd"/>
<rect x="733.9" y="355.5" width="27.8" height="5.9" fill="#5e5e5e"/>
<text x="747.8" y="360.3" font-size="4.8" font-weight="normal" fill="#cdcdcd" stroke="#cdcdcd" stroke-width="0.1" text-anchor="middle" textLength="7" lengthAdjust="spacingAndGlyphs">Flip</text>
<rect x="701.4" y="364.7" width="53.8" height="6" fill="#5e5e5e"/>
<text x="728.3" y="369.5" font-size="4.8" font-weight="normal" fill="#d4d4d4" stroke="#d4d4d4" stroke-width="0.1" text-anchor="middle" textLength="33" lengthAdjust="spacingAndGlyphs">Hinge From Edge</text>
<rect x="756.6" y="365.3" width="4.4" height="4.6" fill="#2a2a2a" stroke="#666" stroke-width="0.4"/>
<rect x="757.4" y="366.2" width="2.8" height="0.9" fill="#dddddd"/>
<rect x="701.4" y="374" width="53.8" height="6" fill="#5e5e5e"/>
<text x="728.3" y="378.8" font-size="4.8" font-weight="normal" fill="#d4d4d4" stroke="#d4d4d4" stroke-width="0.1" text-anchor="middle" textLength="41" lengthAdjust="spacingAndGlyphs">Extrude Along Spline</text>
<rect x="756.6" y="374.6" width="4.4" height="4.6" fill="#2a2a2a" stroke="#666" stroke-width="0.4"/>
<rect x="757.4" y="375.5" width="2.8" height="0.9" fill="#dddddd"/>
<rect x="796.4" y="128" width="1.4" height="253" fill="#3c3c3c"/>
<rect x="797.8" y="128" width="2.2" height="253" fill="#474747"/>
</g>
<g id="bottom">
<rect x="0" y="381.5" width="800" height="49.5" fill="#3e3e3e"/>
<rect x="0" y="382" width="800" height="9.5" fill="#444444"/>
<line x1="1.2" y1="383" x2="1.2" y2="408" stroke="#707070" stroke-width="0.8"/>
<rect x="4.5" y="383.3" width="5.6" height="7.8" fill="#4c4c4c"/>
<path d="M8.3,385.3 l-2,2 l2,2" fill="none" stroke="#bbb" stroke-width="0.8"/>
<rect x="10.7" y="383.3" width="51.2" height="7.8" fill="#5a5a5a"/>
<text x="36" y="389" font-size="5" font-weight="normal" fill="#d8d8d8" stroke="#d8d8d8" stroke-width="0.1" text-anchor="middle" textLength="16" lengthAdjust="spacingAndGlyphs">0 / 144</text>
<rect x="63" y="383.3" width="5.6" height="7.8" fill="#4e4e4e"/>
<path d="M64.8,385.3 l2,2 l-2,2" fill="none" stroke="#bbb" stroke-width="0.8"/>
<rect x="2" y="391.5" width="22.2" height="15.5" fill="#3e3e3e"/>
<path d="M9.5,395.5 v4.5 M11,397.5 l3,-2 M11,397.5 l3,2.2" stroke="#3cc8b8" stroke-width="0.9" fill="none"/>
<path d="M9.5,395.5 v4.5" stroke="#c87070" stroke-width="0.8"/>
<rect x="24.2" y="391.5" width="755.2" height="16.4" fill="#2c2c2c"/>
<rect x="24.2" y="391.5" width="755.2" height="10.5" fill="#343434"/>
<path d="M27.60,391.8 v6 M32.78,391.8 v6 M37.96,391.8 v6 M43.14,391.8 v6 M48.32,391.8 v6 M53.50,391.8 v6 M58.68,391.8 v6 M63.86,391.8 v6 M69.04,391.8 v6 M74.22,391.8 v6 M79.40,391.8 v6 M84.58,391.8 v6 M89.76,391.8 v6 M94.94,391.8 v6 M100.12,391.8 v6 M105.30,391.8 v6 M110.48,391.8 v6 M115.66,391.8 v6 M120.84,391.8 v6 M126.02,391.8 v6 M131.20,391.8 v6 M136.38,391.8 v6 M141.56,391.8 v6 M146.74,391.8 v6 M151.92,391.8 v6 M157.10,391.8 v6 M162.28,391.8 v6 M167.46,391.8 v6 M172.64,391.8 v6 M177.82,391.8 v6 M183.00,391.8 v6 M188.18,391.8 v6 M193.36,391.8 v6 M198.54,391.8 v6 M203.72,391.8 v6 M208.90,391.8 v6 M214.08,391.8 v6 M219.26,391.8 v6 M224.44,391.8 v6 M229.62,391.8 v6 M234.80,391.8 v6 M239.98,391.8 v6 M245.16,391.8 v6 M250.34,391.8 v6 M255.52,391.8 v6 M260.70,391.8 v6 M265.88,391.8 v6 M271.06,391.8 v6 M276.24,391.8 v6 M281.42,391.8 v6 M286.60,391.8 v6 M291.78,391.8 v6 M296.96,391.8 v6 M302.14,391.8 v6 M307.32,391.8 v6 M312.50,391.8 v6 M317.68,391.8 v6 M322.86,391.8 v6 M328.04,391.8 v6 M333.22,391.8 v6 M338.40,391.8 v6 M343.58,391.8 v6 M348.76,391.8 v6 M353.94,391.8 v6 M359.12,391.8 v6 M364.30,391.8 v6 M369.48,391.8 v6 M374.66,391.8 v6 M379.84,391.8 v6 M385.02,391.8 v6 M390.20,391.8 v6 M395.38,391.8 v6 M400.56,391.8 v6 M405.74,391.8 v6 M410.92,391.8 v6 M416.10,391.8 v6 M421.28,391.8 v6 M426.46,391.8 v6 M431.64,391.8 v6 M436.82,391.8 v6 M442.00,391.8 v6 M447.18,391.8 v6 M452.36,391.8 v6 M457.54,391.8 v6 M462.72,391.8 v6 M467.90,391.8 v6 M473.08,391.8 v6 M478.26,391.8 v6 M483.44,391.8 v6 M488.62,391.8 v6 M493.80,391.8 v6 M498.98,391.8 v6 M504.16,391.8 v6 M509.34,391.8 v6 M514.52,391.8 v6 M519.70,391.8 v6 M524.88,391.8 v6 M530.06,391.8 v6 M535.24,391.8 v6 M540.42,391.8 v6 M545.60,391.8 v6 M550.78,391.8 v6 M555.96,391.8 v6 M561.14,391.8 v6 M566.32,391.8 v6 M571.50,391.8 v6 M576.68,391.8 v6 M581.86,391.8 v6 M587.04,391.8 v6 M592.22,391.8 v6 M597.40,391.8 v6 M602.58,391.8 v6 M607.76,391.8 v6 M612.94,391.8 v6 M618.12,391.8 v6 M623.30,391.8 v6 M628.48,391.8 v6 M633.66,391.8 v6 M638.84,391.8 v6 M644.02,391.8 v6 M649.20,391.8 v6 M654.38,391.8 v6 M659.56,391.8 v6 M664.74,391.8 v6 M669.92,391.8 v6 M675.10,391.8 v6 M680.28,391.8 v6 M685.46,391.8 v6 M690.64,391.8 v6 M695.82,391.8 v6 M701.00,391.8 v6 M706.18,391.8 v6 M711.36,391.8 v6 M716.54,391.8 v6 M721.72,391.8 v6 M726.90,391.8 v6 M732.08,391.8 v6 M737.26,391.8 v6 M742.44,391.8 v6 M747.62,391.8 v6 M752.80,391.8 v6 M757.98,391.8 v6 M763.16,391.8 v6 M768.34,391.8 v6 M773.52,391.8 v6 M778.70,391.8 v6" stroke="#5a5a5a" stroke-width="1.4"/>
<text x="53.5" y="401.9" font-size="5.2" font-weight="normal" fill="#d4d4d4" stroke="#d4d4d4" stroke-width="0.1" text-anchor="middle">5</text>
<text x="79.4" y="401.9" font-size="5.2" font-weight="normal" fill="#d4d4d4" stroke="#d4d4d4" stroke-width="0.1" text-anchor="middle">10</text>
<text x="105.3" y="401.9" font-size="5.2" font-weight="normal" fill="#d4d4d4" stroke="#d4d4d4" stroke-width="0.1" text-anchor="middle">15</text>
<text x="131.2" y="401.9" font-size="5.2" font-weight="normal" fill="#d4d4d4" stroke="#d4d4d4" stroke-width="0.1" text-anchor="middle">20</text>
<text x="157.1" y="401.9" font-size="5.2" font-weight="normal" fill="#d4d4d4" stroke="#d4d4d4" stroke-width="0.1" text-anchor="middle">25</text>
<text x="183.0" y="401.9" font-size="5.2" font-weight="normal" fill="#d4d4d4" stroke="#d4d4d4" stroke-width="0.1" text-anchor="middle">30</text>
<text x="208.9" y="401.9" font-size="5.2" font-weight="normal" fill="#d4d4d4" stroke="#d4d4d4" stroke-width="0.1" text-anchor="middle">35</text>
<text x="234.8" y="401.9" font-size="5.2" font-weight="normal" fill="#d4d4d4" stroke="#d4d4d4" stroke-width="0.1" text-anchor="middle">40</text>
<text x="260.7" y="401.9" font-size="5.2" font-weight="normal" fill="#d4d4d4" stroke="#d4d4d4" stroke-width="0.1" text-anchor="middle">45</text>
<text x="286.6" y="401.9" font-size="5.2" font-weight="normal" fill="#d4d4d4" stroke="#d4d4d4" stroke-width="0.1" text-anchor="middle">50</text>
<text x="312.5" y="401.9" font-size="5.2" font-weight="normal" fill="#d4d4d4" stroke="#d4d4d4" stroke-width="0.1" text-anchor="middle">55</text>
<text x="338.4" y="401.9" font-size="5.2" font-weight="normal" fill="#d4d4d4" stroke="#d4d4d4" stroke-width="0.1" text-anchor="middle">60</text>
<text x="364.3" y="401.9" font-size="5.2" font-weight="normal" fill="#d4d4d4" stroke="#d4d4d4" stroke-width="0.1" text-anchor="middle">65</text>
<text x="390.2" y="401.9" font-size="5.2" font-weight="normal" fill="#d4d4d4" stroke="#d4d4d4" stroke-width="0.1" text-anchor="middle">70</text>
<text x="416.1" y="401.9" font-size="5.2" font-weight="normal" fill="#d4d4d4" stroke="#d4d4d4" stroke-width="0.1" text-anchor="middle">75</text>
<text x="442.0" y="401.9" font-size="5.2" font-weight="normal" fill="#d4d4d4" stroke="#d4d4d4" stroke-width="0.1" text-anchor="middle">80</text>
<text x="467.9" y="401.9" font-size="5.2" font-weight="normal" fill="#d4d4d4" stroke="#d4d4d4" stroke-width="0.1" text-anchor="middle">85</text>
<text x="493.8" y="401.9" font-size="5.2" font-weight="normal" fill="#d4d4d4" stroke="#d4d4d4" stroke-width="0.1" text-anchor="middle">90</text>
<text x="519.7" y="401.9" font-size="5.2" font-weight="normal" fill="#d4d4d4" stroke="#d4d4d4" stroke-width="0.1" text-anchor="middle">95</text>
<text x="545.6" y="401.9" font-size="5.2" font-weight="normal" fill="#d4d4d4" stroke="#d4d4d4" stroke-width="0.1" text-anchor="middle">100</text>
<text x="571.5" y="401.9" font-size="5.2" font-weight="normal" fill="#d4d4d4" stroke="#d4d4d4" stroke-width="0.1" text-anchor="middle">105</text>
<text x="597.4" y="401.9" font-size="5.2" font-weight="normal" fill="#d4d4d4" stroke="#d4d4d4" stroke-width="0.1" text-anchor="middle">110</text>
<text x="623.3" y="401.9" font-size="5.2" font-weight="normal" fill="#d4d4d4" stroke="#d4d4d4" stroke-width="0.1" text-anchor="middle">115</text>
<text x="649.2" y="401.9" font-size="5.2" font-weight="normal" fill="#d4d4d4" stroke="#d4d4d4" stroke-width="0.1" text-anchor="middle">120</text>
<text x="675.1" y="401.9" font-size="5.2" font-weight="normal" fill="#d4d4d4" stroke="#d4d4d4" stroke-width="0.1" text-anchor="middle">125</text>
<text x="701.0" y="401.9" font-size="5.2" font-weight="normal" fill="#d4d4d4" stroke="#d4d4d4" stroke-width="0.1" text-anchor="middle">130</text>
<text x="726.9" y="401.9" font-size="5.2" font-weight="normal" fill="#d4d4d4" stroke="#d4d4d4" stroke-width="0.1" text-anchor="middle">135</text>
<text x="752.8" y="401.9" font-size="5.2" font-weight="normal" fill="#d4d4d4" stroke="#d4d4d4" stroke-width="0.1" text-anchor="middle">140</text>
<rect x="25.3" y="392.8" width="3.9" height="9.4" fill="#c4c028" stroke="#3a3a20" stroke-width="0.6" rx="1"/>
<rect x="779.4" y="391.5" width="20.6" height="16" fill="#474747"/>
<rect x="24" y="405.8" width="776" height="2.5" fill="#2a2a2a"/>
<rect x="0" y="408" width="800" height="23" fill="#434343"/>
<rect x="1.9" y="410" width="40.6" height="9.5" fill="#dcc6c8"/>
<rect x="1.9" y="419.3" width="40.6" height="1" fill="#c0b0b0"/>
<rect x="1.9" y="420.5" width="40.6" height="8.3" fill="#ffffff"/>
<line x1="44.3" y1="409" x2="44.3" y2="431" stroke="#2c2c2c" stroke-width="0.8"/>
<text x="46.9" y="417.4" font-size="5" font-weight="normal" fill="#e0e0e0" stroke="#e0e0e0" stroke-width="0.1" text-anchor="start" textLength="35" lengthAdjust="spacingAndGlyphs">1 Object Selected</text>
<text x="46.3" y="427.8" font-size="5" font-weight="normal" fill="#e0e0e0" stroke="#e0e0e0" stroke-width="0.1" text-anchor="start" textLength="24.3" lengthAdjust="spacingAndGlyphs">Select faces</text>
<rect x="0" y="429.5" width="800" height="1.5" fill="#2e2e2e"/>
<circle cx="430.6" cy="415.3" r="1.6" fill="#3cd8c8"/>
<g fill="#888"><circle cx="428" cy="413" r="0.5"/><circle cx="433.2" cy="413" r="0.5"/><circle cx="428" cy="417.6" r="0.5"/><circle cx="433.2" cy="417.6" r="0.5"/></g>
<rect x="440.3" y="414.5" width="3.4" height="3.6" fill="#e8e8e8" rx="0.4"/>
<path d="M440.9,414.6 v-1.2 a1.1,1.1 0 0 1 2.2,0 v1.2" fill="none" stroke="#e8e8e8" stroke-width="0.7"/>
<rect x="450" y="412.6" width="5" height="5" fill="none" stroke="#ddd" stroke-width="0.8"/><circle cx="452.5" cy="415.1" r="1.1" fill="#ddd"/>
<text x="459.3" y="417.5" font-size="4.8" font-weight="normal" fill="#cfcfcf" stroke="#cfcfcf" stroke-width="0.1" text-anchor="start" textLength="3.2" lengthAdjust="spacingAndGlyphs">X:</text>
<rect x="464.4" y="412.1" width="28.7" height="6.9" fill="#595959"/>
<text x="466" y="417.4" font-size="4.6" font-weight="normal" fill="#dadada" stroke="#dadada" stroke-width="0.1" text-anchor="start" textLength="15" lengthAdjust="spacingAndGlyphs">-12.136</text>
<path d="M490.4,413.2 v4.5" stroke="#ccc" stroke-width="0.7"/>
<text x="495" y="417.5" font-size="4.8" font-weight="normal" fill="#cfcfcf" stroke="#cfcfcf" stroke-width="0.1" text-anchor="start" textLength="3" lengthAdjust="spacingAndGlyphs">Y:</text>
<rect x="500" y="412.1" width="28" height="6.9" fill="#595959"/>
<text x="501.3" y="417.4" font-size="4.6" font-weight="normal" fill="#c8c8c8" stroke="#c8c8c8" stroke-width="0.1" text-anchor="start" textLength="5.6" lengthAdjust="spacingAndGlyphs">0.0</text>
<path d="M526,413.2 v4.5" stroke="#ccc" stroke-width="0.7"/>
<text x="529" y="417.5" font-size="4.8" font-weight="normal" fill="#cfcfcf" stroke="#cfcfcf" stroke-width="0.1" text-anchor="start" textLength="3.4" lengthAdjust="spacingAndGlyphs">Z:</text>
<rect x="535" y="412.1" width="28" height="6.9" fill="#595959"/>
<text x="537" y="417.4" font-size="4.6" font-weight="normal" fill="#c8c8c8" stroke="#c8c8c8" stroke-width="0.1" text-anchor="start" textLength="5.6" lengthAdjust="spacingAndGlyphs">0.0</text>
<path d="M561,413.2 v4.5" stroke="#ccc" stroke-width="0.7"/>
<text x="565" y="417.3" font-size="4.8" font-weight="normal" fill="#d8d8d8" stroke="#d8d8d8" stroke-width="0.1" text-anchor="start" textLength="23" lengthAdjust="spacingAndGlyphs">Grid = 10.0</text>
<rect x="500" y="420.2" width="8.4" height="8.4" fill="#555"/>
<circle cx="504.2" cy="424.4" r="2.6" fill="#e0e0e0"/><path d="M502.6,423 l3.2,2.8 M505.8,423 l-3.2,2.8" stroke="#555" stroke-width="0.7"/>
<text x="510.6" y="427.2" font-size="4.8" font-weight="normal" fill="#d8d8d8" stroke="#d8d8d8" stroke-width="0.1" text-anchor="start" textLength="17" lengthAdjust="spacingAndGlyphs">Enabled:</text>
<circle cx="532.5" cy="425.2" r="2.2" fill="#38e040"/>
<circle cx="540.6" cy="425.2" r="2.8" fill="#f0f0f0"/><circle cx="540.6" cy="425.2" r="1.3" fill="none" stroke="#555" stroke-width="0.6"/>
<line x1="548.1" y1="421" x2="548.1" y2="429" stroke="#2c2c2c" stroke-width="0.8"/>
<circle cx="553.1" cy="425.2" r="2.3" fill="none" stroke="#bbb" stroke-width="0.7"/>
<text x="560.6" y="427.4" font-size="4.8" font-weight="normal" fill="#d8d8d8" stroke="#d8d8d8" stroke-width="0.1" text-anchor="start" textLength="27.5" lengthAdjust="spacingAndGlyphs">Add Time Tag</text>
<g fill="#d8d8d8">
<path d="M612.3,413 v5.2 h0.8 v-5.2z M618.5,413 l-2.8,2.6 l2.8,2.6z M615.8,413 l-2.5,2.6 l2.5,2.6z"/>
<path d="M623.5,413.3 v4.8 h0.8 v-4.8z M630,413.3 l-4.3,2.4 l4.3,2.4z"/>
<path d="M634,412.3 l7,3.6 l-7,3.6z"/>
<path d="M642.5,413.3 l4.3,2.4 l-4.3,2.4z M647.5,413.3 v4.8 h0.8 v-4.8z"/>
<path d="M652,413 l2.8,2.6 l-2.8,2.6z M654.7,413 l2.5,2.6 l-2.5,2.6z M658.2,413 v5.2 h0.8 v-5.2z"/>
<path d="M613,424.8 l2.2,-2 v4z M619,424.8 l-2.2,-2 v4z"/>
</g>
<rect x="622" y="421.2" width="27.5" height="6.9" fill="#595959"/>
<text x="623.5" y="426.8" font-size="4.6" font-weight="normal" fill="#bbb" stroke="#bbb" stroke-width="0.1" text-anchor="start">0</text>
<path d="M647.5,422 v5" stroke="#ccc" stroke-width="0.7"/>
<circle cx="655.5" cy="424" r="2" fill="#e0e0e0"/><circle cx="658" cy="426.3" r="1.8" fill="#c89028"/>
<rect x="666.2" y="410.9" width="17" height="17.5" fill="#555"/>
<path d="M673.7,414 v10 M668.8,419 h9.8" stroke="#f0f0f0" stroke-width="1.8"/>
<path d="M675,422.5 l4,-3 l1,1.2 l-3.5,3.2z" fill="#30b0a0"/>
<rect x="685" y="411.5" width="19.4" height="7.5" fill="#4e4e4e"/>
<text x="686.2" y="417.6" font-size="4.8" font-weight="normal" fill="#e0e0e0" stroke="#e0e0e0" stroke-width="0.1" text-anchor="start" textLength="17.2" lengthAdjust="spacingAndGlyphs">Auto Key</text>
<rect x="706.2" y="411.5" width="47.5" height="7.5" fill="#555"/>
<text x="708" y="417.6" font-size="4.8" font-weight="normal" fill="#e0e0e0" stroke="#e0e0e0" stroke-width="0.1" text-anchor="start" textLength="18" lengthAdjust="spacingAndGlyphs">Selected</text>
<circle cx="750" cy="415.2" r="0.9" fill="#ddd"/>
<rect x="685" y="420.3" width="19.4" height="8.1" fill="#4e4e4e"/>
<text x="686.5" y="426.6" font-size="4.8" font-weight="normal" fill="#e0e0e0" stroke="#e0e0e0" stroke-width="0.1" text-anchor="start" textLength="15" lengthAdjust="spacingAndGlyphs">Set Key</text>
<path d="M708,421.5 l1.5,5.5 M714,421.5 l-1.5,5.5 M711,420.5 v3" stroke="#3cc8b8" stroke-width="1.1"/>
<rect x="717.5" y="420.3" width="36.2" height="8.1" fill="#555"/>
<text x="723" y="426.6" font-size="4.8" font-weight="normal" fill="#d8d8d8" stroke="#d8d8d8" stroke-width="0.1" text-anchor="start" textLength="25" lengthAdjust="spacingAndGlyphs">Key Filters...</text>
<circle cx="763.3" cy="413.6" r="1.8" fill="none" stroke="#e0e0e0" stroke-width="0.9"/><path d="M762,415 l-2.5,2.5" stroke="#e0e0e0" stroke-width="1"/>
<path d="M770,417.5 l2,-2.5" stroke="#e0e0e0" stroke-width="1"/><rect x="771.5" y="412" width="3.8" height="3.8" fill="#3cc8b8"/>
<path d="M781.3,411.8 l2.5,2.5 l-2.5,2.5 l-2.5,-2.5z" fill="#3cc8b8"/><circle cx="781.3" cy="414.3" r="0.8" fill="#2a6a60"/>
<path d="M790,416.5 l2,-2" stroke="#e0e0e0" stroke-width="1"/><rect x="791.5" y="412" width="3" height="3.5" fill="#3cc8b8"/>
<path d="M760.5,421.3 l4,2.5 l-4,2.5" fill="none" stroke="#e0e0e0" stroke-width="0.9"/>
<path d="M771,421.5 q1.5,-0.5 2.5,1 v4 h-3 z" fill="#e8e8e8"/>
<path d="M779,426.5 l4,-4" stroke="#e0e0e0" stroke-width="1.2"/><rect x="781" y="421" width="3" height="2" fill="#3cc8b8"/>
<rect x="789.3" y="421" width="5" height="5.5" fill="#e8e8e8"/><path d="M789.3,426.5 l3,-3" stroke="#333" stroke-width="1.2"/>
<g fill="#e0e0e0"><rect x="765" y="418" width="1" height="1"/><rect x="776" y="418" width="1" height="1"/><rect x="785" y="418" width="1" height="1"/><rect x="795" y="418" width="1" height="1"/><rect x="766" y="427.5" width="1" height="1"/><rect x="776" y="427.5" width="1" height="1"/><rect x="785.5" y="427.5" width="1" height="1"/></g>
</g>
</svg></body></html>
